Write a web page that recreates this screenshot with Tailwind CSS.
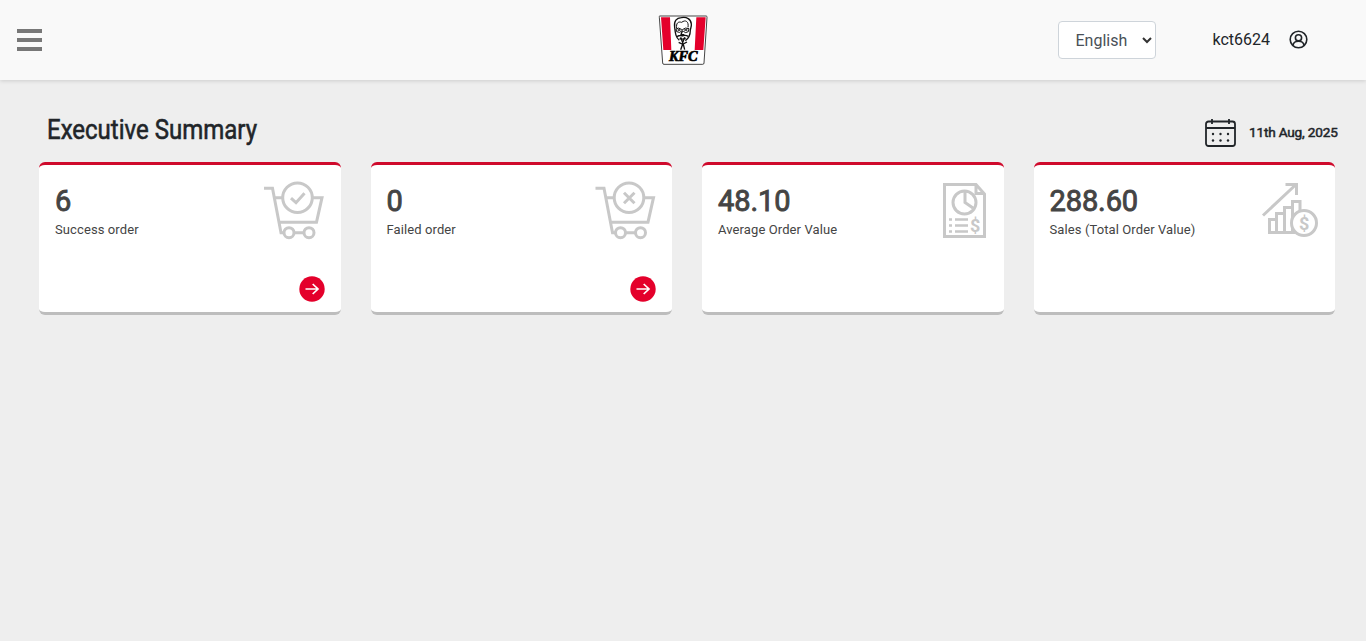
<!DOCTYPE html>
<html lang="en">
<head>
<meta charset="utf-8">
<title>Executive Summary</title>
<script src="https://cdn.jsdelivr.net/npm/@tailwindcss/browser@4"></script>
</head>
<body class="min-h-screen bg-[#eeeeee] font-['Roboto',sans-serif] text-[#212529]">
<header class="grid h-20 grid-cols-3 items-center bg-[#f9f9f9] shadow-[0_1px_4px_rgba(0,0,0,0.14)]">
  <button aria-label="Menu" class="ml-[17px] flex w-[25px] flex-col gap-[5px]">
    <span class="h-1 bg-[#777]"></span><span class="h-1 bg-[#777]"></span><span class="h-1 bg-[#777]"></span>
  </button>
  <svg class="h-16 w-[66px] justify-self-center" viewBox="0 0 198 192" fill="none">
    <path d="M29 24H169Q171 24 171 28L162 165Q162 169 158 169H42Q38 169 38 165L28 28Q27 24 29 24Z" fill="#fff" stroke="#222" stroke-width="2.5"/>
    <path d="M33 28H60L64 126H40ZM139 28H167L160 126H134Z" fill="#e4002b"/>
    <path d="M74 58C71 38 80 30 94 29C110 26 123 33 124 48C125 54 122 60 121 66M74 58C76 76 77 88 88 97M121 66C121 80 115 92 106 98" stroke="#111" stroke-width="4"/>
    <path d="M80 61C78 45 84 40 95 43C106 34 117 40 114 58" stroke="#111" stroke-width="3"/>
    <path d="M78 63Q86 57 94 64L97 65Q106 57 117 62L115 71Q106 77 100 70L96 68Q90 77 80 71Z" stroke="#111" stroke-width="3"/>
    <path d="M83 66H91M103 66H112M97 69L93 80H103M81 86Q90 80 97 84Q106 80 115 85M89 91Q98 96 107 90" stroke="#111" stroke-width="4"/>
    <path d="M92 88L98 104L104 88M86 103L98 109L111 102M98 109L92 125M100 109L104 125" stroke="#111" stroke-width="4"/>
    <text x="57" y="159" textLength="86" lengthAdjust="spacingAndGlyphs" font-family="Liberation Serif" font-size="41" font-weight="700" font-style="italic" fill="#000" stroke="#000" stroke-width="2">KFC</text>
  </svg>
  <div class="flex items-center justify-end pr-[58px]">
    <div class="relative mr-14 h-[38px] w-[98px]">
      <select aria-label="Language" class="h-full w-full appearance-none rounded border border-[#ced4da] bg-white pt-0.5 pl-4 text-base text-[#495057]"><option>English</option></select>
      <svg class="pointer-events-none absolute top-[15px] right-[3px] h-2 w-3" viewBox="0 0 12 8" fill="none" stroke="#333" stroke-width="2"><path d="M2 2L6 6L10 2"/></svg>
    </div>
    <span class="mr-[19px] text-base leading-6">kct6624</span>
    <svg class="-mt-0.5 h-[19px] w-[19px]" viewBox="0 0 19 19" fill="none" stroke="#212529" stroke-width="1.6"><circle cx="9.5" cy="9.5" r="8.3"/><circle cx="9.5" cy="7.8" r="3.1"/><path d="M4 15.4C4.3 12.6 6.3 11.2 9.5 11.2S14.7 12.6 15 15.4"/></svg>
  </div>
</header>
<main class="pt-8 pr-[31px] pl-[39px]">
  <div class="flex h-[50px] items-start justify-between">
    <h1 class="ml-2 w-[210px] pt-px"><svg class="h-9 w-[212px] overflow-visible" viewBox="0 0 212 36"><text x="0" y="25.500" textLength="210" lengthAdjust="spacingAndGlyphs" font-family="Roboto" font-size="28.500" font-weight="400" fill="#212529" stroke="#212529" stroke-width=".6">Executive Summary</text></svg></h1>
    <div class="-mr-[3px] flex items-center gap-[13px] pt-[6px]">
      <svg class="h-[29px] w-8 overflow-visible" viewBox="-1 -1 32 29" fill="none" stroke="#212529" stroke-width="1.8"><rect x="1" y="2.500" width="29" height="24.5" rx="2.5"/><path d="M1 9H30M7 0V5M24 0V5"/><g fill="#212529" stroke="none"><circle cx="8" cy="15" r="1.200"/><circle cx="15.500" cy="15" r="1.200"/><circle cx="23" cy="15" r="1.200"/><circle cx="8" cy="21.500" r="1.200"/><circle cx="15.500" cy="21.500" r="1.200"/><circle cx="23" cy="21.500" r="1.200"/></g></svg>
      <span class="w-[89px] text-[13.6px] tracking-[-0.18px] whitespace-nowrap [-webkit-text-stroke:0.5px_#212529]">11th Aug, 2025</span>
    </div>
  </div>
  <div class="grid grid-cols-4 gap-[30px]">
    <section class="flex h-[153px] justify-between rounded-md border-t-[3px] border-b-[3px] border-t-[#cf0a2c] border-b-[#bdbdbd] bg-white pl-4">
      <div class="pt-[18px] text-[#444]"><div class="text-[29px] leading-9 tracking-[-0.1px] [-webkit-text-stroke:0.9px_#444]">6</div><div class="mt-[3px] text-[13px] leading-4 tracking-[0.1px] whitespace-nowrap">Success order</div></div>
      <div class="flex w-[86px] flex-col justify-between pt-[8px] pb-[10px]">
        <svg class="h-[70px] w-[86px]" viewBox="0 -0.7 86 70" fill="none" stroke="#c8c8c8" stroke-width="3"><path d="M9 14.500H17.500L26 59H29M20.500 24H28M57 24H67L61.500 48.500H24M39 59H49"/><circle cx="42.500" cy="24" r="14.800"/><circle cx="34" cy="59" r="5"/><circle cx="54" cy="59" r="5"/><path d="M36 24.500L41 29L49.500 19.500"/></svg>
        <svg class="ml-[44px] h-[26px] w-[26px]" viewBox="0 0 26 26" fill="none"><circle cx="13" cy="13" r="12.700" fill="#e4002b"/><path d="M6.500 13H19M13.700 8L19 13L13.700 18" stroke="#fff" stroke-width="1.700"/></svg>
      </div>
    </section>
    <section class="flex h-[153px] justify-between rounded-md border-t-[3px] border-b-[3px] border-t-[#cf0a2c] border-b-[#bdbdbd] bg-white pl-4">
      <div class="pt-[18px] text-[#444]"><div class="text-[29px] leading-9 tracking-[-0.1px] [-webkit-text-stroke:0.9px_#444]">0</div><div class="mt-[3px] text-[13px] leading-4 tracking-[0.1px] whitespace-nowrap">Failed order</div></div>
      <div class="flex w-[86px] flex-col justify-between pt-[8px] pb-[10px]">
        <svg class="h-[70px] w-[86px]" viewBox="0 -0.7 86 70" fill="none" stroke="#c8c8c8" stroke-width="3"><path d="M9.500 14.500H18L26.500 59H29.500M21 24H28.500M57.500 24H67.500L62 48.500H24.500M39.500 59H49.500"/><circle cx="43" cy="24" r="14.800"/><circle cx="34.500" cy="59" r="5"/><circle cx="54.500" cy="59" r="5"/><path d="M38 19L48.500 29.500M48.500 19L38 29.500"/></svg>
        <svg class="ml-[44px] h-[26px] w-[26px]" viewBox="0 0 26 26" fill="none"><circle cx="13" cy="13" r="12.700" fill="#e4002b"/><path d="M6.500 13H19M13.700 8L19 13L13.700 18" stroke="#fff" stroke-width="1.700"/></svg>
      </div>
    </section>
    <section class="flex h-[153px] justify-between rounded-md border-t-[3px] border-b-[3px] border-t-[#cf0a2c] border-b-[#bdbdbd] bg-white pl-4">
      <div class="pt-[18px] text-[#444]"><div class="text-[29px] leading-9 tracking-[-0.1px] [-webkit-text-stroke:0.9px_#444]">48.10</div><div class="mt-[3px] text-[13px] leading-4 tracking-[0.1px] whitespace-nowrap">Average Order Value</div></div>
      <svg class="mt-[7px] mr-[4px] h-[80px] w-[70px]" viewBox="0 0 70 80" fill="none" stroke="#c8c8c8" stroke-width="3"><path d="M14.500 12.500H46L54.500 22V64.500H14.500ZM46 12.500V21.500H54"/><circle cx="34.500" cy="30.500" r="11.500"/><path d="M35 19V30.500L43 36"/><path d="M25 47.500H38M25 53.500H38M25 59.500H38M19 47.500H22M19 53.500H22M19 59.500H22" stroke-width="2.500"/><text x="40" y="60" font-family="Roboto" font-size="18" font-weight="700" fill="#c8c8c8" stroke="none">$</text></svg>
    </section>
    <section class="flex h-[153px] justify-between rounded-md border-t-[3px] border-b-[3px] border-t-[#cf0a2c] border-b-[#bdbdbd] bg-white pl-4">
      <div class="pt-[18px] text-[#444]"><div class="text-[29px] leading-9 tracking-[-0.1px] [-webkit-text-stroke:0.9px_#444]">288.60</div><div class="mt-[3px] text-[13px] leading-4 tracking-[0.1px] whitespace-nowrap">Sales (Total Order Value)</div></div>
      <svg class="mt-[7px] h-[80px] w-[85px]" viewBox="0 0 85 80" fill="none" stroke="#c8c8c8" stroke-width="3"><path d="M13 43.500L46 12.500M35.500 12.500H46.500V23M19.500 60.500V47.500H26.500V60.500M26.500 47.500V41.500H34.500V60.500M34.500 41.500V35.500H42.500V60.500M42.500 35.500V29.500H50V42M18 60.500H45"/><circle cx="54" cy="51" r="12.500" fill="#fff"/><text x="49" y="57.500" font-family="Roboto" font-size="18" font-weight="700" fill="#c8c8c8" stroke="none">$</text></svg>
    </section>
  </div>
</main>
</body>
</html>
